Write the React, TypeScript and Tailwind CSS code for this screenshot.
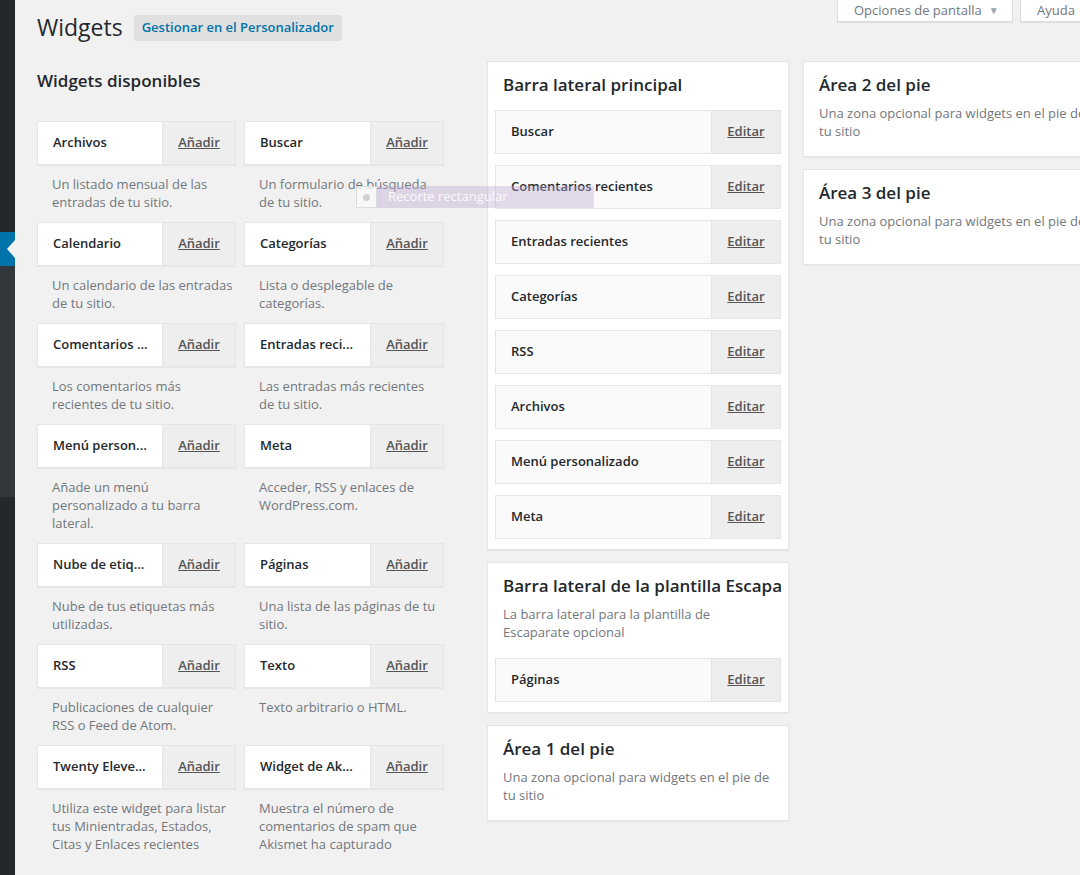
import React from "react";

interface Widget {
  title: string;
  desc: string[];
}

const available: Widget[] = [
  { title: "Archivos", desc: ["Un listado mensual de las", "entradas de tu sitio."] },
  { title: "Buscar", desc: ["Un formulario de búsqueda", "de tu sitio."] },
  { title: "Calendario", desc: ["Un calendario de las entradas", "de tu sitio."] },
  { title: "Categorías", desc: ["Lista o desplegable de", "categorías."] },
  { title: "Comentarios ...", desc: ["Los comentarios más", "recientes de tu sitio."] },
  { title: "Entradas reci...", desc: ["Las entradas más recientes", "de tu sitio."] },
  { title: "Menú person...", desc: ["Añade un menú", "personalizado a tu barra", "lateral."] },
  { title: "Meta", desc: ["Acceder, RSS y enlaces de", "WordPress.com."] },
  { title: "Nube de etiq...", desc: ["Nube de tus etiquetas más", "utilizadas."] },
  { title: "Páginas", desc: ["Una lista de las páginas de tu", "sitio."] },
  { title: "RSS", desc: ["Publicaciones de cualquier", "RSS o Feed de Atom."] },
  { title: "Texto", desc: ["Texto arbitrario o HTML."] },
  {
    title: "Twenty Eleve...",
    desc: ["Utiliza este widget para listar", "tus Minientradas, Estados,", "Citas y Enlaces recientes"],
  },
  { title: "Widget de Ak...", desc: ["Muestra el número de", "comentarios de spam que", "Akismet ha capturado"] },
];

const mainSidebar = [
  "Buscar",
  "Comentarios recientes",
  "Entradas recientes",
  "Categorías",
  "RSS",
  "Archivos",
  "Menú personalizado",
  "Meta",
];

function AvailableWidget({ w }: { w: Widget }) {
  return (
    <div className="pb-[11px]">
      <div className="flex h-[44px] bg-white border border-[#e5e5e5] shadow-[0_1px_1px_rgba(0,0,0,0.04)]">
        <div className="flex-1 flex items-center pl-[15px] text-[13px] font-semibold text-[#23282d] whitespace-nowrap">
          {w.title}
        </div>
        <div className="w-[73px] flex items-center justify-center bg-[#eeeeee] border-l border-[#e5e5e5] text-[13px] font-semibold text-[#555] underline">
          Añadir
        </div>
      </div>
      <div className="pt-[10px] pl-[15px] text-[13px] leading-[18px] text-[#72777c]">
        {w.desc.map((line) => (
          <div key={line} className="whitespace-nowrap">
            {line}
          </div>
        ))}
      </div>
    </div>
  );
}

function SidebarItem({ title }: { title: string }) {
  return (
    <div className="flex h-[44px] bg-[#fafafa] border border-[#e5e5e5]">
      <div className="flex-1 flex items-center pl-[15px] text-[13px] font-semibold text-[#23282d] whitespace-nowrap">
        {title}
      </div>
      <div className="w-[69px] flex items-center justify-center bg-[#eeeeee] border-l border-[#e5e5e5] text-[13px] font-semibold text-[#555] underline">
        Editar
      </div>
    </div>
  );
}

function Area({ title, desc, children }: { title: string; desc?: string[]; children?: React.ReactNode }) {
  return (
    <div className="bg-white border border-[#e5e5e5] shadow-[0_1px_1px_rgba(0,0,0,0.04)] px-[7px] pt-[13px] pb-[10px]">
      <h3 className="px-[8px] text-[17px] leading-[20px] font-semibold text-[#23282d] whitespace-nowrap">
        {title}
      </h3>
      {desc && (
        <div className="px-[8px] mt-[9px] text-[13px] leading-[18px] text-[#72777c]">
          {desc.map((line) => (
            <div key={line} className="whitespace-nowrap">
              {line}
            </div>
          ))}
        </div>
      )}
      {children}
    </div>
  );
}

export default function App() {
  const footDesc = ["Una zona opcional para widgets en el pie de", "tu sitio"];

  return (
    <div className="w-[1080px] h-[875px] overflow-hidden bg-[#f1f1f1] flex font-['Open_Sans',sans-serif]">
      {/* admin menu edge */}
      <div className="w-[15px] shrink-0 flex flex-col">
        <div className="h-[232px] bg-[#23282d]" />
        <div className="h-[34px] bg-[#0073aa] flex items-center justify-end">
          <svg width="8" height="18" viewBox="0 0 8 18">
            <path d="M8 0 L0 9 L8 18 Z" fill="#f1f1f1" />
          </svg>
        </div>
        <div className="h-[231px] bg-[#32373c]" />
        <div className="flex-1 bg-[#23282d]" />
      </div>

      <div className="flex-1 relative pl-[22px] min-w-0">
        {/* screen meta links */}
        <div className="absolute top-0 left-[822px] flex gap-[7px]">
          <div className="h-[22px] w-[176px] bg-white border border-t-0 border-[#ddd] shadow-[0_1px_1px_rgba(0,0,0,0.06)] flex items-center pl-[16px] text-[13px] text-[#72777c] whitespace-nowrap">
            Opciones de pantalla
            <span className="ml-[7px] text-[10px] text-[#a0a5aa]">▼</span>
          </div>
          <div className="h-[22px] w-[80px] bg-white border border-t-0 border-[#ddd] shadow-[0_1px_1px_rgba(0,0,0,0.06)] flex items-center pl-[16px] text-[13px] text-[#72777c]">
            Ayuda
          </div>
        </div>

        <div className="flex items-center gap-[11px] pt-[13px] pb-[19px]">
          <h1 className="text-[23px] leading-[29px] font-normal text-[#23282d]">Widgets</h1>
          <div className="h-[26px] px-[8px] flex items-center bg-[#e0e0e0] rounded-[2px] text-[13px] font-semibold text-[#0073aa] whitespace-nowrap">
            Gestionar en el Personalizador
          </div>
        </div>

        <div className="flex items-start">
          <div className="w-[407px] shrink-0 pt-[10px]">
            <h2 className="text-[17px] leading-[20px] font-semibold text-[#23282d] mb-[30px]">
              Widgets disponibles
            </h2>
            <div className="grid grid-cols-[199px_200px] gap-x-[8px]">
              {available.map((w) => (
                <AvailableWidget key={w.title} w={w} />
              ))}
            </div>
          </div>

          <div className="w-[302px] shrink-0 ml-[43px] flex flex-col gap-[12px]">
            <Area title="Barra lateral principal">
              <div className="mt-[15px] flex flex-col gap-[11px]">
                {mainSidebar.map((t) => (
                  <SidebarItem key={t} title={t} />
                ))}
              </div>
            </Area>
            <Area title="Barra lateral de la plantilla Escapa" desc={["La barra lateral para la plantilla de", "Escaparate opcional"]}>
              <div className="mt-[17px]">
                <SidebarItem title="Páginas" />
              </div>
            </Area>
            <Area title="Área 1 del pie" desc={footDesc}>
              <div className="h-[6px]" />
            </Area>
          </div>

          <div className="w-[302px] shrink-0 ml-[14px] flex flex-col gap-[12px]">
            <Area title="Área 2 del pie" desc={footDesc}>
              <div className="h-[6px]" />
            </Area>
            <Area title="Área 3 del pie" desc={footDesc}>
              <div className="h-[6px]" />
            </Area>
          </div>
        </div>

        {/* drag helper overlay */}
        <div className="absolute top-[186px] left-[341px] flex h-[22px] pointer-events-none">
          <div className="w-[21px] h-[22px] bg-[rgba(250,250,250,0.8)] border border-[#dcdcdc] flex items-center justify-center">
            <div className="w-[7px] h-[7px] rounded-full bg-[#d0d0d0]" />
          </div>
          <div className="w-[217px] bg-[rgba(190,170,210,0.4)] flex items-center pl-[11px] text-[13px] text-[rgba(255,255,255,0.9)] whitespace-nowrap">
            Recorte rectangular
          </div>
        </div>
      </div>
    </div>
  );
}
